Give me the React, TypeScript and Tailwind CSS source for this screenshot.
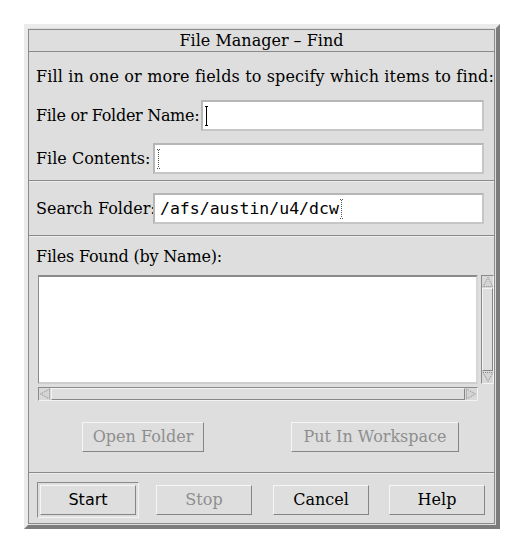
import React from "react";

const serif = "font-['DejaVu_Serif','Liberation_Serif',serif]";

function IBeam({ dotted }: { dotted?: boolean }) {
  const c = dotted ? "#555" : "#000";
  return (
    <svg width="5" height="20" viewBox="0 0 5 20" className="shrink-0">
      <line x1="2.5" y1="1" x2="2.5" y2="19" stroke={c} strokeWidth="1" strokeDasharray={dotted ? "1 1" : undefined} />
      <line x1="1" y1="0.5" x2="4" y2="0.5" stroke={c} strokeWidth="1" strokeDasharray={dotted ? "1 1" : undefined} />
      <line x1="1" y1="19.5" x2="4" y2="19.5" stroke={c} strokeWidth="1" strokeDasharray={dotted ? "1 1" : undefined} />
    </svg>
  );
}

function Arrow({ dir }: { dir: "up" | "down" | "left" | "right" }) {
  const pts: Record<string, string> = {
    up: "6,1.5 11,10.5 1,10.5",
    down: "1,1.5 11,1.5 6,10.5",
    left: "1.5,6 10.5,1 10.5,11",
    right: "1.5,1 10.5,6 1.5,11",
  };
  return (
    <svg width="12" height="12" viewBox="0 0 12 12" className="shrink-0">
      <polygon points={pts[dir]} fill="#d4d4d4" stroke="#8a8a8a" strokeWidth="1" strokeDasharray="1 1" />
    </svg>
  );
}

function Field({ w, children }: { w: string; children?: React.ReactNode }) {
  return (
    <div
      className={`ml-auto shrink-0 h-full ${w} bg-white border-2 border-[#c6c6c6] border-t-[#b6b6b6] border-l-[#b6b6b6] flex items-center pl-[1px]`}
    >
      {children}
    </div>
  );
}

function Btn({ w, children, disabled }: { w: string; children: React.ReactNode; disabled?: boolean }) {
  return (
    <div
      className={`${w} h-[30px] flex items-center justify-center border border-t-[#f6f6f6] border-l-[#f6f6f6] border-b-[#858585] border-r-[#858585] text-[16px] ${
        disabled ? "text-[#8e8e8e]" : "text-black"
      }`}
    >
      {children}
    </div>
  );
}

function Sep() {
  return <div className="h-[2px] border-t border-t-[#8a8a8a] border-b border-b-[#ececec]" />;
}

export default function App() {
  return (
    <div className={`min-h-screen bg-white pl-[24px] pt-[24px] ${serif}`}>
      <div className="w-[476px] h-[505px] bg-[#dedede] border-4 border-t-[#ebebeb] border-l-[#ebebeb] border-r-[#7c7c7c] border-b-[#7c7c7c] pt-[1px] pr-[1px] pb-[1px] flex flex-col">
        <div className="w-[467px] h-[495px] border border-[#8a8a8a] flex flex-col">
          <div className="h-[22px] border-b border-[#8a8a8a] flex items-center justify-center text-[16px] leading-[20px] text-black">
            File Manager – Find
          </div>

          <div className="pt-[15px] pl-[7px] h-[35px] text-[16px] leading-[20px] text-black whitespace-nowrap tracking-[0.15px]">
            Fill in one or more fields to specify which items to find:
          </div>

          <div className="mt-[13px] h-[31px] flex items-center pl-[7px] pr-[10px] text-[16px] text-black">
            <span className="whitespace-nowrap min-w-0 tracking-[-0.3px]">File or Folder Name:</span>
            <Field w="w-[283px]">
              <IBeam />
            </Field>
          </div>

          <div className="mt-[12px] h-[31px] flex items-center pl-[7px] pr-[10px] text-[16px] text-black">
            <span className="whitespace-nowrap min-w-0">File Contents:</span>
            <Field w="w-[331px]">
              <IBeam dotted />
            </Field>
          </div>

          <div className="mt-[6px]">
            <Sep />
          </div>

          <div className="mt-[11px] h-[31px] flex items-center pl-[7px] pr-[10px] text-[16px] text-black">
            <span className="whitespace-nowrap min-w-0">Search Folder:</span>
            <Field w="w-[331px]">
              <span className="pl-[4px] font-['DejaVu_Sans_Mono','Liberation_Mono',monospace] text-[16.5px] leading-[20px]">
                /afs/austin/u4/dcw
              </span>
              <IBeam dotted />
            </Field>
          </div>

          <div className="mt-[11px]">
            <Sep />
          </div>

          <div className="mt-[10px] h-[20px] pl-[7px] text-[16px] leading-[20px] text-black whitespace-nowrap tracking-[-0.2px]">
            Files Found (by Name):
          </div>

          <div className="mt-[8px] flex pl-[9px]">
            <div className="w-[440px] h-[109px] bg-white border-t-2 border-l border-t-[#8a8a8a] border-l-[#8a8a8a] border-b-2 border-r-2 border-b-[#cdcdcd] border-r-[#d6d6d6]" />
            <div className="ml-[3px] w-[13px] h-[109px] flex flex-col border border-t-[#8a8a8a] border-l-[#8a8a8a] border-b-[#f2f2f2] border-r-[#f2f2f2] bg-[#d9d9d9]">
              <div className="h-[12px] flex items-center justify-center">
                <Arrow dir="up" />
              </div>
              <div className="flex-1 border border-t-[#f4f4f4] border-l-[#f4f4f4] border-b-[#858585] border-r-[#858585] bg-[#dedede]" />
              <div className="h-[12px] flex items-center justify-center">
                <Arrow dir="down" />
              </div>
            </div>
          </div>

          <div className="mt-[3px] pl-[9px]">
            <div className="w-[440px] h-[14px] flex border border-t-[#8a8a8a] border-l-[#8a8a8a] border-b-[#f2f2f2] border-r-[#f2f2f2] bg-[#d9d9d9]">
              <div className="w-[12px] flex items-center justify-center">
                <Arrow dir="left" />
              </div>
              <div className="flex-1 border border-t-[#f4f4f4] border-l-[#f4f4f4] border-b-[#858585] border-r-[#858585] bg-[#dedede]" />
              <div className="w-[12px] flex items-center justify-center">
                <Arrow dir="right" />
              </div>
            </div>
          </div>

          <div className="mt-[21px] flex pl-[53px]">
            <Btn w="w-[122px]" disabled>
              Open Folder
            </Btn>
            <div className="ml-[87px]">
              <Btn w="w-[168px]" disabled>
                Put In Workspace
              </Btn>
            </div>
          </div>

          <div className="mt-[20px]">
            <Sep />
          </div>

          <div className="mt-[8px] h-[36px] flex items-center pl-[8px]">
            <div className="w-[102px] h-[36px] p-[2px] border border-t-[#8a8a8a] border-l-[#8a8a8a] border-b-[#f4f4f4] border-r-[#f4f4f4]">
              <Btn w="w-[96px]">
                <span className="font-['DejaVu_Sans','Liberation_Sans',sans-serif]">Start</span>
              </Btn>
            </div>
            <div className="ml-[17px]">
              <Btn w="w-[96px]" disabled>
                Stop
              </Btn>
            </div>
            <div className="ml-[21px]">
              <Btn w="w-[96px]">Cancel</Btn>
            </div>
            <div className="ml-[20px]">
              <Btn w="w-[96px]">Help</Btn>
            </div>
          </div>
        </div>
      </div>
    </div>
  );
}
